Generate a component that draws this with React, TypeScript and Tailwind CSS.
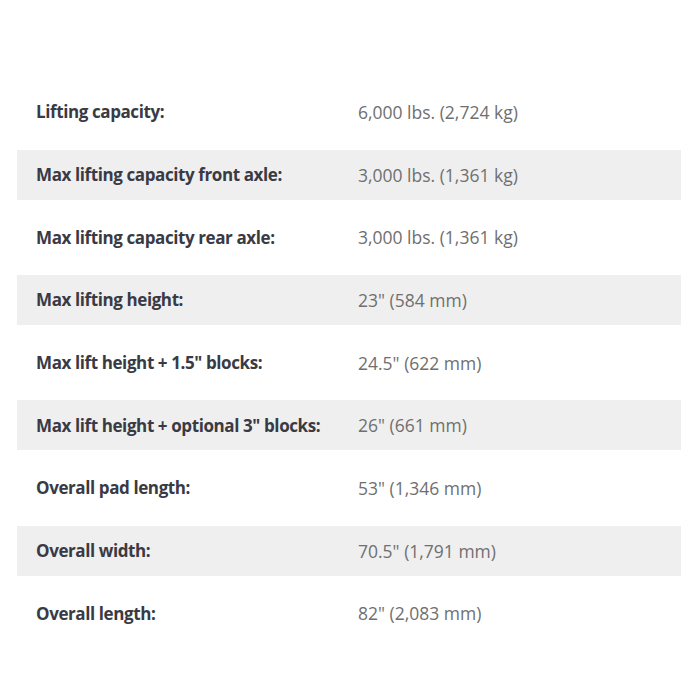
const specs = [
  ["Lifting capacity:", "6,000 lbs. (2,724 kg)"],
  ["Max lifting capacity front axle:", "3,000 lbs. (1,361 kg)"],
  ["Max lifting capacity rear axle:", "3,000 lbs. (1,361 kg)"],
  ["Max lifting height:", "23\" (584 mm)"],
  ["Max lift height + 1.5\" blocks:", "24.5\" (622 mm)"],
  ["Max lift height + optional 3\" blocks:", "26\" (661 mm)"],
  ["Overall pad length:", "53\" (1,346 mm)"],
  ["Overall width:", "70.5\" (1,791 mm)"],
  ["Overall length:", "82\" (2,083 mm)"],
];

export default function App() {
  return (
    <div className="w-[700px] h-[700px] bg-white pt-[87px] pl-[17px] font-['Open_Sans',sans-serif]">
      <div className="w-[664px] flex flex-col gap-[12.7px]">
        {specs.map(([label, value], i) => (
          <div
            key={label}
            className={`flex items-center h-[50px] ${i % 2 === 1 ? "bg-[#efefef]" : ""}`}
          >
            <div className="w-[341px] pl-[19px] text-[17px] font-bold text-[#3a3a44] tracking-[-0.4px]">{label}</div>
            <div className="text-[17.5px] text-[#6f6f6f]">{value}</div>
          </div>
        ))}
      </div>
    </div>
  );
}
